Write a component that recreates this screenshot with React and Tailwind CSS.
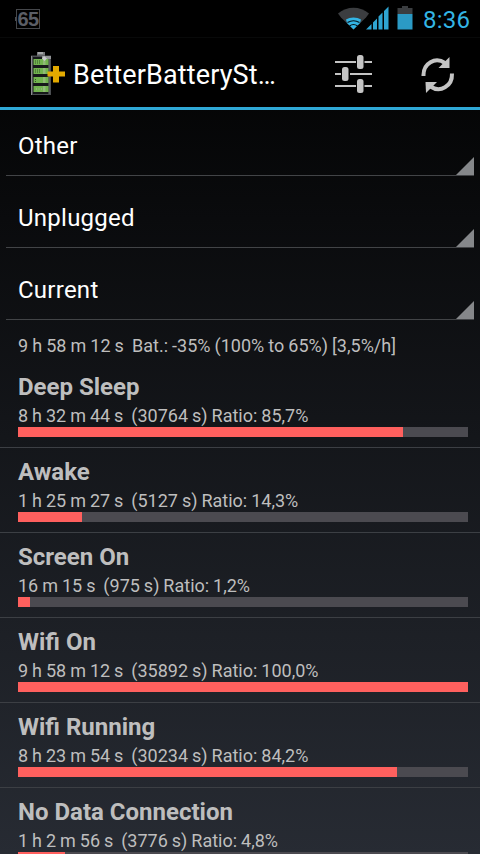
import React from 'react';

const filters = ['Other', 'Unplugged', 'Current'];

const stats = [
  { name: 'Deep Sleep', time: '8 h 32 m 44 s', seconds: 30764, ratio: '85,7%', value: 85.6 },
  { name: 'Awake', time: '1 h 25 m 27 s', seconds: 5127, ratio: '14,3%', value: 14.2 },
  { name: 'Screen On', time: '16 m 15 s', seconds: 975, ratio: '1,2%', value: 2.7 },
  { name: 'Wifi On', time: '9 h 58 m 12 s', seconds: 35892, ratio: '100,0%', value: 100 },
  { name: 'Wifi Running', time: '8 h 23 m 54 s', seconds: 30234, ratio: '84,2%', value: 84.2 },
  { name: 'No Data Connection', time: '1 h 2 m 56 s', seconds: 3776, ratio: '4,8%', value: 10.5 },
];

const WifiIcon = () => (
  <svg width="32" height="24" viewBox="0 0 32 24">
    <path d="M0 7.500C9-.3 22-.3 31 7.500L28 11.500L15.500 23.500L3 11.500Z" fill="#3b3d40" />
    <path d="M8 13.500C12 10.700 19 10.700 23 13.500L22 17L15.500 23.500L9 17Z" fill="#33b5e5" />
    <path d="M9.500 16.500Q15.500 13 21.500 16.500M11.500 20Q15.500 17 19.500 20" fill="none" stroke="#06141a" strokeWidth="1.200" />
  </svg>
);

const SignalIcon = () => (
  <svg width="24" height="24" viewBox="0 0 24 24" fill="#2fa5d2">
    <path d="M0 23.500L5.500 18V23.500ZM7 16.500L11 12.500V23.500H7ZM12.500 10.500L16.500 6.500V23.500H12.500ZM18 5L22.500 .5V23.500H18Z" />
  </svg>
);

const BatteryIcon = () => (
  <svg width="16" height="24" viewBox="0 0 16 24">
    <path d="M5 0h6v2h4.500v6H.5V2H5Z" fill="#3b3e41" />
    <path d="M.5 8h15v15.500H.5Z" fill="#2b9ac5" />
  </svg>
);

const AppLogo = () => (
  <svg width="36" height="46" viewBox="0 0 36 46">
    <path d="M7 1h8v4H7Z" fill="#77797b" />
    <path d="M8 1h5v2H8Z" fill="#a5a7a9" />
    <path d="M1 4.500h20v39.500H1Z" fill="#4b4e51" />
    <path d="M1 5h1v39H1Z" fill="#8a8c8e" />
    <path d="M3 6h16v37H3Z" fill="#17191a" />
    <path d="M18.500 7h1v36h-1Z" fill="#6d7073" />
    <path d="M12 5h9v3h-9Z" fill="#939597" />
    <path d="M3.500 8h15v6h-15ZM3.500 17h15v6h-15ZM3.500 26h15v6h-15ZM3.500 35h15v6h-15Z" fill="#72b44f" />
    <path d="M13 8h2.500v6H13ZM13 17h2.500v6H13ZM13 26h2.500v6H13ZM13 35h2.500v6H13Z" fill="#8fba76" />
    <path
      d="M5 10h6M5 12h6M5 19h6M5 21h6M5 28.500h2M5 30.500h2"
      stroke="#35502a"
      strokeWidth="1"
      strokeDasharray="1 1"
    />
    <path d="M6 38h9" stroke="#a9b5a2" strokeDasharray="1 1.500" />
    <path d="M14 5l3 2.500-2.500 2.500-2.500-2.500Z" fill="#c9cbcc" />
    <path d="M23 15h6v5.500h6v5h-6V31.500h-6v-6h-5.500v-5H23Z" fill="#e3aa00" />
  </svg>
);

const SlidersIcon = () => (
  <svg width="40" height="40" viewBox="0 0 40 40" fill="#c4c4c4">
    <path d="M1 6h21v2H1ZM30.500 6H38v2h-7.500ZM1 18h6v2H1ZM16 18h22v2H16ZM1 30h21v2H1ZM30.500 30H38v2h-7.500Z" />
    <rect x="23" y="0" width="6.500" height="14" rx="2.500" />
    <rect x="8" y="12" width="6.500" height="14" rx="2.500" />
    <rect x="23" y="24" width="6.500" height="14" rx="2.500" />
  </svg>
);

const RefreshIcon = () => (
  <svg width="36" height="38" viewBox="0 0 36 38">
    <path d="M3.500 20C3 7 15.500 .5 25 7" fill="none" stroke="#c4c4c4" strokeWidth="4" />
    <path d="M29.500 1V12H18.500Z" fill="#c4c4c4" />
    <path d="M32 17.500C32.500 30.500 20 37 10.500 30.500" fill="none" stroke="#c4c4c4" strokeWidth="4" />
    <path d="M5.500 26H17L6 37Z" fill="#c4c4c4" />
  </svg>
);

const StatusBar = () => (
  <div className="flex h-[38px] shrink-0 items-center border-b border-[#080909] bg-black pr-[9px] pb-px pl-[15px]">
    <div className="flex items-center pt-px">
      <span className="h-1 w-px bg-[#4a4c50]" />
      <span className="flex h-5 w-6 items-center justify-center border border-[#45474b] font-['Liberation_Sans'] text-[20px] leading-none font-bold tracking-[-0.5px] text-[#5b5e66]">
        65
      </span>
    </div>
    <div className="ml-auto flex items-center">
      <WifiIcon />
      <span className="-ml-1"><SignalIcon /></span>
      <span className="ml-[7px]"><BatteryIcon /></span>
      <span className="ml-[10px] w-[48px] pt-[3px] text-[24px] leading-none tracking-[0.2px] whitespace-nowrap text-[#33b5e5]">
        8:36
      </span>
    </div>
  </div>
);

const ActionBar = () => (
  <div className="flex h-[72px] shrink-0 items-center border-b-[3px] border-[#2fa8d6] bg-black pr-[24px] pl-[30px]">
    <div className="pt-[2px]">
      <AppLogo />
    </div>
    <h1 className="ml-[7px] pt-[6px] text-[27px] leading-none tracking-[0.13px] whitespace-nowrap text-white">
      BetterBatterySt…
    </h1>
    <div className="ml-auto flex items-center gap-[46px] pt-[4px]">
      <SlidersIcon />
      <RefreshIcon />
    </div>
  </div>
);

const Spinner = ({ label }) => (
  <div className="mx-1.5 flex h-[72px] shrink-0 items-end justify-between border-b border-[#424447] first:h-[66px]">
    <span className="pb-[15px] pl-3 text-[24px] leading-[28px] tracking-[0.25px] text-white">{label}</span>
    <svg width="18" height="18" viewBox="0 0 18 18">
      <path d="M18 0V18H0Z" fill="#85878a" />
    </svg>
  </div>
);

const StatRow = ({ stat }) => (
  <li className="h-[85px] shrink-0 border-b border-[#3c3f44] pr-3 pl-[18px] pt-[9px] text-[#bebebe]">
    <h2 className="text-[24px] leading-[30px] font-bold">{stat.name}</h2>
    <p className="h-[25px] text-[18px] leading-[27px] [word-spacing:-0.5px] whitespace-pre">
      {`${stat.time}  (${stat.seconds} s) Ratio: ${stat.ratio}`}
    </p>
    <div className="h-2.5 bg-[#4b4a50]">
      <div className="h-full bg-[#ff605e]" style={{ width: `${stat.value}%` }} />
    </div>
  </li>
);

const App = () => {
  return (
    <div className="flex h-[854px] w-[480px] flex-col overflow-hidden bg-[linear-gradient(to_bottom,#000000,#272b33)] font-[Roboto,sans-serif]">
      <StatusBar />
      <ActionBar />
      <div className="flex shrink-0 flex-col">
        {filters.map((label) => (
          <Spinner key={label} label={label} />
        ))}
      </div>
      <p className="h-[43px] shrink-0 pt-3 pl-[18px] text-[18px] leading-[27px] [word-spacing:-0.4px] whitespace-pre text-[#bebebe]">
        9 h 58 m 12 s  Bat.: -35% (100% to 65%) [3,5%/h]
      </p>
      <ul className="flex shrink-0 flex-col">
        {stats.map((stat) => (
          <StatRow key={stat.name} stat={stat} />
        ))}
      </ul>
    </div>
  );
};

export default App;
